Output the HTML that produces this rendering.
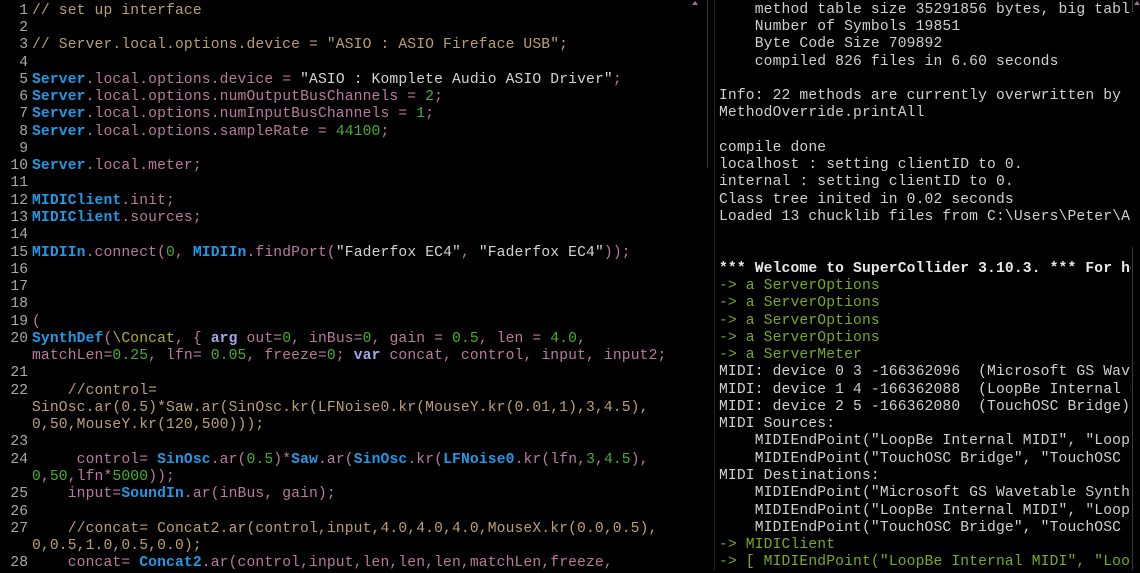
<!DOCTYPE html>
<html><head><meta charset="utf-8"><style>
html,body{margin:0;padding:0;background:#000;width:1140px;height:570px;overflow:hidden}
.pane{position:absolute;top:0;font-family:"Liberation Mono",monospace;font-size:14.67px;line-height:17.28px;letter-spacing:0.14px;overflow:hidden;color:#ccc}
#ed{left:0;width:712px;height:570px}
#post{left:719px;width:412px;height:570px;color:#d0d0d0}
.row{height:17.28px;white-space:pre}
.n{display:inline-block;width:28px;text-align:right;color:#a8a8a8;padding-right:4px;letter-spacing:0}
.w{display:inline-block;width:32px}
.c{color:#1e9ae8;font-weight:bold}
.i{color:#b97a9e}
.s{color:#d4d4d4}
.g{color:#45b02a}
.k{color:#a4a8e8;font-weight:bold}
.y{color:#b0b030}
.cm{color:#b9a070}
.gr{color:#7aab1a}
.b{font-weight:bold;color:#e8e8e8}
.line{position:absolute;background:#3a3a3a}
</style></head><body>
<div class="pane" id="ed" style="top:2.8px">
<div class="row"><span class="n">1</span><span class="cm">// set up interface</span></div>
<div class="row"><span class="n">2</span></div>
<div class="row"><span class="n">3</span><span class="cm">// Server.local.options.device = "ASIO : ASIO Fireface USB";</span></div>
<div class="row"><span class="n">4</span></div>
<div class="row"><span class="n">5</span><span class="c">Server</span><span class="i">.local.options.device = </span><span class="s">"ASIO : Komplete Audio ASIO Driver"</span><span class="i">;</span></div>
<div class="row"><span class="n">6</span><span class="c">Server</span><span class="i">.local.options.numOutputBusChannels = </span><span class="g">2</span><span class="i">;</span></div>
<div class="row"><span class="n">7</span><span class="c">Server</span><span class="i">.local.options.numInputBusChannels = </span><span class="g">1</span><span class="i">;</span></div>
<div class="row"><span class="n">8</span><span class="c">Server</span><span class="i">.local.options.sampleRate = </span><span class="g">44100</span><span class="i">;</span></div>
<div class="row"><span class="n">9</span></div>
<div class="row"><span class="n">10</span><span class="c">Server</span><span class="i">.local.meter;</span></div>
<div class="row"><span class="n">11</span></div>
<div class="row"><span class="n">12</span><span class="c">MIDIClient</span><span class="i">.init;</span></div>
<div class="row"><span class="n">13</span><span class="c">MIDIClient</span><span class="i">.sources;</span></div>
<div class="row"><span class="n">14</span></div>
<div class="row"><span class="n">15</span><span class="c">MIDIIn</span><span class="i">.connect(</span><span class="g">0</span><span class="i">, </span><span class="c">MIDIIn</span><span class="i">.findPort(</span><span class="s">"Faderfox EC4"</span><span class="i">, </span><span class="s">"Faderfox EC4"</span><span class="i">));</span></div>
<div class="row"><span class="n">16</span></div>
<div class="row"><span class="n">17</span></div>
<div class="row"><span class="n">18</span></div>
<div class="row"><span class="n">19</span><span class="i">(</span></div>
<div class="row"><span class="n">20</span><span class="c">SynthDef</span><span class="i">(</span><span class="y">\Concat</span><span class="i">, { </span><span class="k">arg</span><span class="i"> out=</span><span class="g">0</span><span class="i">, inBus=</span><span class="g">0</span><span class="i">, gain = </span><span class="g">0.5</span><span class="i">, len = </span><span class="g">4.0</span><span class="i">,</span></div>
<div class="row"><span class="w"></span><span class="i">matchLen=</span><span class="g">0.25</span><span class="i">, lfn= </span><span class="g">0.05</span><span class="i">, freeze=</span><span class="g">0</span><span class="i">; </span><span class="k">var</span><span class="i"> concat, control, input, input2;</span></div>
<div class="row"><span class="n">21</span></div>
<div class="row"><span class="n">22</span><span class="cm">    //control=</span></div>
<div class="row"><span class="w"></span><span class="cm">SinOsc.ar(0.5)*Saw.ar(SinOsc.kr(LFNoise0.kr(MouseY.kr(0.01,1),3,4.5),</span></div>
<div class="row"><span class="w"></span><span class="cm">0,50,MouseY.kr(120,500)));</span></div>
<div class="row"><span class="n">23</span></div>
<div class="row"><span class="n">24</span><span class="i">     control= </span><span class="c">SinOsc</span><span class="i">.ar(</span><span class="g">0.5</span><span class="i">)*</span><span class="c">Saw</span><span class="i">.ar(</span><span class="c">SinOsc</span><span class="i">.kr(</span><span class="c">LFNoise0</span><span class="i">.kr(lfn,</span><span class="g">3</span><span class="i">,</span><span class="g">4.5</span><span class="i">),</span></div>
<div class="row"><span class="w"></span><span class="g">0</span><span class="i">,</span><span class="g">50</span><span class="i">,lfn*</span><span class="g">5000</span><span class="i">));</span></div>
<div class="row"><span class="n">25</span><span class="i">    input=</span><span class="c">SoundIn</span><span class="i">.ar(inBus, gain);</span></div>
<div class="row"><span class="n">26</span></div>
<div class="row"><span class="n">27</span><span class="cm">    //concat= Concat2.ar(control,input,4.0,4.0,4.0,MouseX.kr(0.0,0.5),</span></div>
<div class="row"><span class="w"></span><span class="cm">0,0.5,1.0,0.5,0.0);</span></div>
<div class="row"><span class="n">28</span><span class="i">    concat= </span><span class="c">Concat2</span><span class="i">.ar(control,input,len,len,len,matchLen,freeze,</span></div>
</div>

<div class="line" style="left:707px;top:0;width:1px;height:168px"></div>
<div class="line" style="left:714px;top:0;width:1px;height:570px;background:#222"></div>
<div class="line" style="left:1132px;top:0;width:1px;height:12px"></div>
<div class="line" style="left:1132px;top:247px;width:1px;height:323px"></div>
<div style="position:absolute;left:1134px;top:1px;width:0;height:0;border-left:3px solid transparent;border-right:3px solid transparent;border-bottom:4px solid #a07090"></div>
<div style="position:absolute;left:692px;top:1px;width:0;height:0;border-left:3px solid transparent;border-right:3px solid transparent;border-bottom:4px solid #a07090"></div>

<div class="pane" id="post" style="top:1.8px">
<div class="row">    method table size 35291856 bytes, big table</div>
<div class="row">    Number of Symbols 19851</div>
<div class="row">    Byte Code Size 709892</div>
<div class="row">    compiled 826 files in 6.60 seconds</div>
<div class="row"></div>
<div class="row">Info: 22 methods are currently overwritten by</div>
<div class="row">MethodOverride.printAll</div>
<div class="row"></div>
<div class="row">compile done</div>
<div class="row">localhost : setting clientID to 0.</div>
<div class="row">internal : setting clientID to 0.</div>
<div class="row">Class tree inited in 0.02 seconds</div>
<div class="row">Loaded 13 chucklib files from C:\Users\Peter\AppData</div>
<div class="row"></div>
<div class="row"></div>
<div class="row"><span class="b">*** Welcome to SuperCollider 3.10.3. *** For help</span></div>
<div class="row gr">-&gt; a ServerOptions</div>
<div class="row gr">-&gt; a ServerOptions</div>
<div class="row gr">-&gt; a ServerOptions</div>
<div class="row gr">-&gt; a ServerOptions</div>
<div class="row gr">-&gt; a ServerMeter</div>
<div class="row">MIDI: device 0 3 -166362096  (Microsoft GS Wavetable</div>
<div class="row">MIDI: device 1 4 -166362088  (LoopBe Internal MIDI)</div>
<div class="row">MIDI: device 2 5 -166362080  (TouchOSC Bridge)</div>
<div class="row">MIDI Sources:</div>
<div class="row">    MIDIEndPoint("LoopBe Internal MIDI", "LoopBe</div>
<div class="row">    MIDIEndPoint("TouchOSC Bridge", "TouchOSC Bridge")</div>
<div class="row">MIDI Destinations:</div>
<div class="row">    MIDIEndPoint("Microsoft GS Wavetable Synth"</div>
<div class="row">    MIDIEndPoint("LoopBe Internal MIDI", "LoopBe</div>
<div class="row">    MIDIEndPoint("TouchOSC Bridge", "TouchOSC Bridge")</div>
<div class="row gr">-&gt; MIDIClient</div>
<div class="row gr">-&gt; [ MIDIEndPoint("LoopBe Internal MIDI", "LoopBe</div>
</div>
</body></html>
